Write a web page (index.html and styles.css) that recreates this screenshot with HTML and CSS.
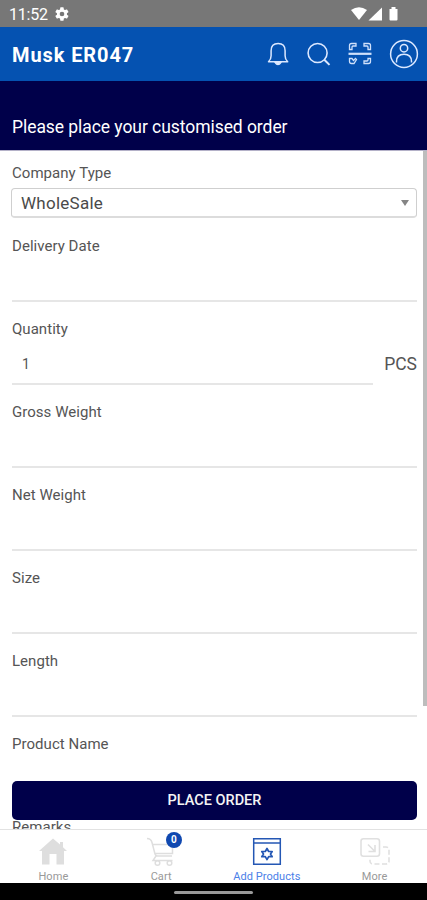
FILE: index.html
```html
<!DOCTYPE html>
<html lang="en">
<head>
<meta charset="utf-8">
<meta name="viewport" content="width=device-width, initial-scale=1">
<title>Customised order</title>
<link rel="stylesheet" href="styles.css">
</head>
<body>
<div class="app">
  <div class="status">
    <span class="time">11:52</span>
    <svg class="gear" width="16" height="16" viewBox="0 0 24 24"><path fill="#fff" fill-rule="evenodd" d="M19.4 13a7.500 7.500 0 0 0 0-2l2.100-1.600a.5.5 0 0 0 .1-.7l-2-3.400a.5.5 0 0 0-.6-.2l-2.500 1a7.300 7.300 0 0 0-1.700-1l-.4-2.600a.5.500 0 0 0-.5-.5h-4a.5.500 0 0 0-.5.500L9 5.100a7.700 7.700 0 0 0-1.700 1l-2.500-1a.5.5 0 0 0-.6.200l-2 3.400a.5.5 0 0 0 .1.700L4.500 11a7.500 7.500 0 0 0 0 2l-2.200 1.600a.5.5 0 0 0-.1.700l2 3.400a.5.5 0 0 0 .6.200l2.500-1a7.300 7.300 0 0 0 1.700 1l.4 2.600a.5.5 0 0 0 .5.500h4a.5.5 0 0 0 .5-.5l.4-2.600a7.700 7.700 0 0 0 1.700-1l2.500 1a.5.5 0 0 0 .6-.2l2-3.400a.5.5 0 0 0-.1-.7zM12 15.500a3.500 3.500 0 1 1 0-7 3.500 3.500 0 0 1 0 7z"/></svg>
    <svg class="signals" width="50" height="16" viewBox="0 0 50 16"><g fill="#fff"><path d="M1 4Q9-1.500 17 4L9 14z"/><path d="M18.500 14.500L32 1.500v13z"/><path d="M39.500 3h2V1h4v2h2v10.500q0 1-1 1h-6q-1 0-1-1z"/></g></svg>
  </div>
  <header class="bar">
    <h1 class="title">Musk ER047</h1>
    <nav class="tools">
      <svg width="22" height="26" viewBox="0 0 22 26" fill="none" stroke="#dce8ff" stroke-width="1.500" stroke-linejoin="round"><path d="M1.500 20.800q2.600-2.200 2.600-6v-5q0-7.200 7-7.200t7 7.200v5q0 3.800 2.600 6z"/><path d="M8 21.300q3 4.400 6 0z" fill="#dce8ff"/></svg>
      <svg width="26" height="26" viewBox="0 0 26 26" fill="none" stroke="#dce8ff" stroke-width="1.600"><circle cx="12.600" cy="12" r="9.500"/><path d="M19.300 18.700l5.200 5.200" stroke-width="2"/></svg>
      <svg width="26" height="26" viewBox="0 0 26 26" fill="none" stroke="#cfe0fb" stroke-width="1.300"><path d="M2.500 8.500V4.500q0-2 2-2H9V5H6Q5 5 5 6v2.500zM17 2.500h4.500q2 0 2 2v4H21V6q0-1-1-1h-3zM2.500 17.500H5l1.500 2 2-2 1 1-2.500 4H4.500q-2 0-2-2zM23.500 17.500v3q0 2-2 2H17V20h3q1 0 1-1v-1.500z"/><path d="M1.500 12.800h23" stroke-width="2.200"/></svg>
      <svg width="30" height="30" viewBox="0 0 30 30" fill="none" stroke="#dce8ff" stroke-width="1.500"><circle cx="15" cy="15" r="13.400"/><circle cx="15" cy="9.200" r="3.700"/><path d="M7.500 23.500v-1q0-7.300 7.500-7.300t7.500 7.300v1"/></svg>
    </nav>
  </header>
  <section class="banner">Please place your customised order</section>
  <main class="form">
    <div class="company">
      <div class="label">Company Type</div>
      <div class="select"><span>WholeSale</span><i class="caret"></i></div>
    </div>
    <div class="field"><div class="label">Delivery Date</div><div class="input"></div></div>
    <div class="field"><div class="label">Quantity</div><div class="row"><div class="input"><span>1</span></div><span class="unit">PCS</span></div></div>
    <div class="field"><div class="label">Gross Weight</div><div class="input"></div></div>
    <div class="field"><div class="label">Net Weight</div><div class="input"></div></div>
    <div class="field"><div class="label">Size</div><div class="input"></div></div>
    <div class="field"><div class="label">Length</div><div class="input"></div></div>
    <div class="field"><div class="label">Product Name</div><div class="input"></div></div>
    <div class="field"><div class="label">Remarks</div><div class="input"></div></div>
    <i class="thumb"></i>
    <button class="submit" type="button">PLACE ORDER</button>
  </main>
  <nav class="tabs">
    <a class="tab"><svg width="30" height="30" viewBox="0 0 30 30"><path fill="#dedede" d="M15 1.500L1 14h3v13.500h7.500V17h7v10.500H26V14h3l-4-3.800V5h-3v2.500z"/></svg><span>Home</span></a>
    <a class="tab"><svg width="30" height="30" viewBox="0 0 30 30" fill="none" stroke="#dedede" stroke-width="1.500"><path d="M1 1.500q4 0 5 4l3 11.500q.5 2 2.500 2H26M7 7.500h19.500v9H9M10 19l-3 4.500h19.500"/><circle cx="11.500" cy="26" r="2.300"/><circle cx="23.500" cy="26" r="2.300"/></svg><b class="badge">0</b><span>Cart</span></a>
    <a class="tab active"><svg width="30" height="30" viewBox="0 0 30 30" fill="none" stroke="#2457b4" stroke-width="1.500"><path d="M1.700 1.700h26.600v25.600H1.700zM1.700 6h26.600"/><path stroke-width="1.700" stroke-linejoin="round" d="M15 11.500l1.700 3h3.500L18.500 17l1.700 2.700h-3.500l-1.700 3-1.700-3H9.800l1.700-2.700-1.700-2.500h3.500z"/></svg><span>Add Products</span></a>
    <a class="tab"><svg width="30" height="30" viewBox="0 0 30 30" fill="none" stroke="#e0e0e0" stroke-width="1.600"><rect x="1" y="1.700" width="18.500" height="17.500" rx="2.500"/><path d="M8 7.500l6.500 6.500M15 8v6.500H8.500"/><path stroke-dasharray="5 2.500" d="M23 10h3q3 0 3 3v11q0 3-3 3H13q-3 0-3-3v-3"/></svg><span>More</span></a>
  </nav>
  <div class="system"><i class="pill"></i></div>
</div>
</body>
</html>
```
FILE: styles.css
```css
* { box-sizing: border-box; }
body { margin: 0; background: #fff; font-family: Roboto, "Liberation Sans", sans-serif; }
.app { width: 427px; height: 900px; display: flex; flex-direction: column; overflow: hidden; }
.status { height: 27px; flex: none; background: #777; color: #fff; display: flex; align-items: center; padding: 0 27px 0 9px; }
.time { font-size: 16px; line-height: 27px; width: 45px; letter-spacing: -0.2px; padding-top: 1px; }
.gear { margin-top: 1px; }
.signals { margin-left: auto; }
.bar { height: 54px; flex: none; background: #0552b1; color: #fff; display: flex; align-items: center; justify-content: space-between; padding: 0 8px 0 12px; }
.title { margin: 0; font-size: 20px; font-weight: 700; letter-spacing: 0.9px; padding-top: 1px; }
.tools { display: flex; align-items: center; gap: 16px; }
.tools svg { flex: none; }
.banner { height: 69px; flex: none; background: #00004a; color: #fff; font-size: 17.500px; letter-spacing: -0.06px; line-height: 22px; padding: 35px 12px 0; }
.form { position: relative; height: 679px; flex: none; overflow: hidden; border-top: 1px solid #b4b1c8; padding: 12px 10px 0 12px; }
.company { height: 73px; }
.label { font-size: 15px; line-height: 20px; letter-spacing: 0.04px; color: #555; }
.select { height: 30px; margin: 5px 0 0 -1px; border: 1px solid #cfcfcf; border-bottom: 2px solid #dcdcdc; border-radius: 4px; display: flex; align-items: center; justify-content: space-between; padding: 1px 7px 0 9px; font-size: 17px; letter-spacing: 0.25px; color: #4a4a4a; }
.caret { border: 4px solid transparent; border-top: 6px solid #858585; border-bottom: 0; }
.field { height: 82.950px; }
.input { height: 46px; border-bottom: 2px solid #e6e6e6; }
.row { display: flex; gap: 11px; }
.row .input { flex: 1; padding: 15px 0 0 10px; font-size: 14px; line-height: 20px; color: #555; }
.unit { font-size: 17.500px; line-height: 24px; padding-top: 13px; color: #555; }
.thumb { position: absolute; right: 0; top: 0; width: 4px; height: 555px; background: #bdbdbd; }
.submit { position: absolute; left: 12px; right: 10px; top: 630px; height: 39px; border: 0; border-radius: 5px; background: #00004a; color: #f4f4f4; font: 500 14.500px Roboto, "Liberation Sans", sans-serif; }
.tabs { height: 54px; flex: none; border-top: 1px solid #e2e2e2; display: grid; grid-template-columns: repeat(4, 1fr); }
.tab { position: relative; display: flex; flex-direction: column; align-items: center; padding-top: 7px; font-size: 11px; line-height: 14px; letter-spacing: 0.05px; color: #999; }
.tab span { margin-top: 3px; }
.tab:nth-child(even) { left: 1px; }
.active { color: #4b80e8; }
.badge { position: absolute; left: 58px; top: 2px; width: 16px; height: 16px; border-radius: 50%; background: #1048b0; color: #fff; font-size: 10px; line-height: 16px; text-align: center; letter-spacing: 0; }
.system { height: 17px; flex: none; background: #000; display: flex; justify-content: center; align-items: center; }
.pill { width: 79px; height: 3px; margin-top: 1px; border-radius: 2px; background: #999; }
```
